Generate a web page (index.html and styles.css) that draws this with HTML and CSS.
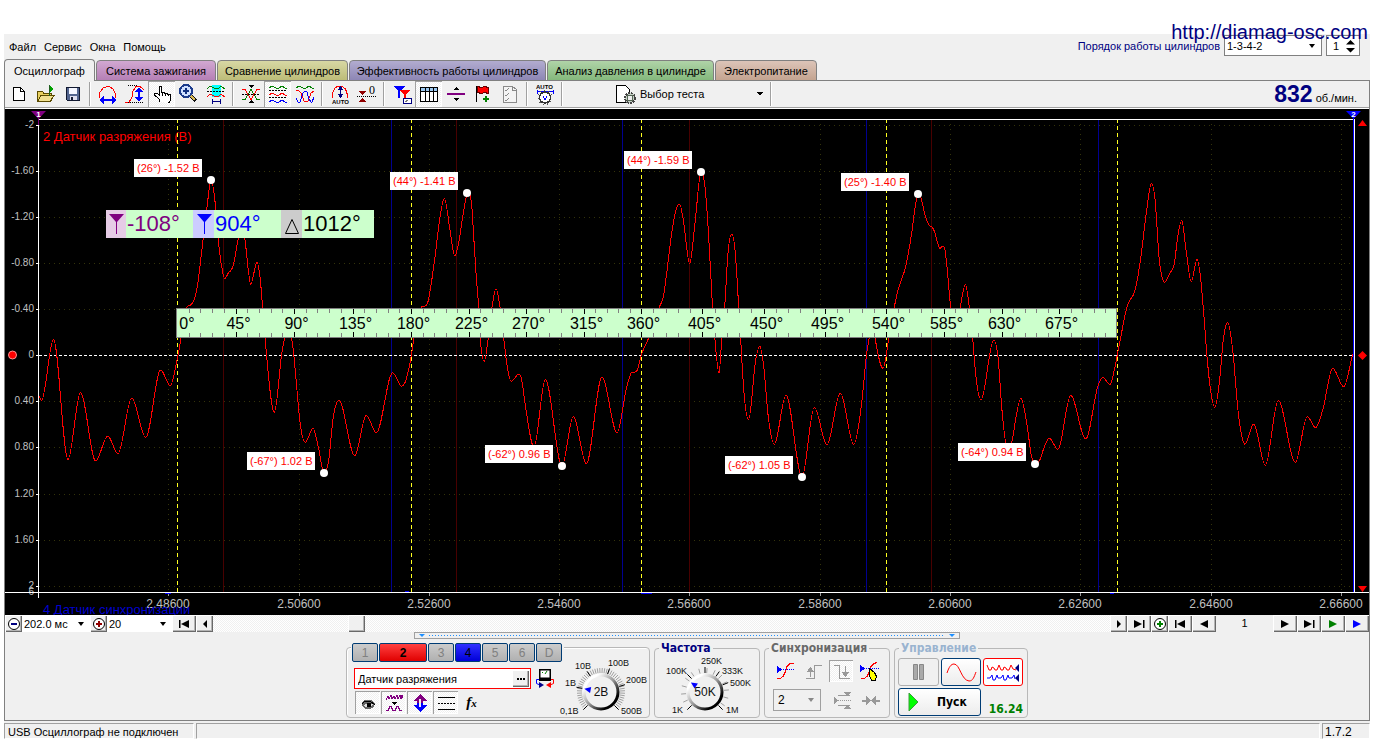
FILE: index.html
```html
<!DOCTYPE html>
<html lang="ru">
<head>
<meta charset="utf-8">
<title>Осциллограф</title>
<link rel="stylesheet" href="styles.css">
</head>
<body>
<div class="app">
  <header class="header">
    <nav class="menu">
      <button type="button">Файл</button><button type="button">Сервис</button><button type="button">Окна</button><button type="button">Помощь</button>
    </nav>
    <div class="order">
      <label for="order">Порядок работы цилиндров</label>
      <span class="select order-select"><select id="order"><option>1-3-4-2</option></select></span>
      <span class="spin"><input type="text" value="1" aria-label="Цилиндр"><svg width="11" height="14" viewBox="0 0 11 14"><path d="M1 5.500 5.500 1 10 5.500zM1 9l4.500 4.500L10 9z"/></svg></span>
    </div>
    <a class="site" href="#">http://diamag-osc.com</a>
  </header>

  <div class="tabs" role="tablist">
    <button type="button" role="tab" aria-selected="true" class="tab t1">Осциллограф</button>
    <button type="button" role="tab" class="tab t2">Система зажигания</button>
    <button type="button" role="tab" class="tab t3">Сравнение цилиндров</button>
    <button type="button" role="tab" class="tab t4">Эффективность работы цилиндров</button>
    <button type="button" role="tab" class="tab t5">Анализ давления в цилиндре</button>
    <button type="button" role="tab" class="tab t6">Электропитание</button>
  </div>

  <main class="main">
    <div class="toolbar">
      <button type="button" class="tool" aria-label="Новый"><svg viewBox="0 0 22 22"><path class="doc" d="M5.500 4.500h7l4 4v9h-11z"/><path class="k" d="M12.500 4.500v4h4"/></svg></button>
      <button type="button" class="tool" aria-label="Открыть"><svg viewBox="0 0 22 22"><path d="M2.500 17V8.500h5l1.500 2h7V17z" fill="#e8d060" stroke="#5a4a00"/><path d="M2.500 18.500 6 12.500h13l-4 6z" fill="#f0e090" stroke="#5a4a00"/><path d="M14 2v8l5-4z" fill="#00a000"/><path d="M14.500 2v11" stroke="#206020"/></svg></button>
      <button type="button" class="tool" aria-label="Сохранить"><svg viewBox="0 0 22 22"><path d="M4.500 4.500h13v13h-12l-1-1z" fill="#52648e" stroke="#101830"/><path d="M7 5h8v6H7z" fill="#f4f6ff"/><path d="M8 13h7v4H8z" fill="#dde"/><path d="M9 14h2v3H9z" fill="#101830"/></svg></button>
      <i class="sep"></i>
      <button type="button" class="tool" aria-label="Период"><svg viewBox="0 0 22 22"><path class="r" d="M2.500 15V10L6 5l4-1.500h2L16 6l2.500 5v4"/><path class="b" stroke-width="2" d="M5 17h12"/><path fill="#00f" d="M2 17l5-4v8zM20 17l-5-4v8z"/></svg></button>
      <button type="button" class="tool" aria-label="Амплитуда"><svg viewBox="0 0 22 22"><path class="r" d="M1 19.500h4L8 14l1-6 3-4.500h4l4 3.500"/><path class="k" stroke-dasharray="1 1" d="M4 2.500h10M4 19.500h15"/><path class="b" stroke-width="2" d="M15 7v10"/><path fill="#00f" d="M15 4l-4 5h8zM15 19l-4-5h8z"/></svg></button>
      <button type="button" class="tool on" aria-label="Рука"><svg viewBox="0 0 22 22"><path fill="#fff" stroke="#000" d="M8.500 18.500v-2L3.500 12v-2h2l3 2.500V3.500h2V9h3v1h3v1h3v6l-2 3.500"/><path class="k" d="M11.500 9v4M14.500 10v3M17.500 11v2"/></svg></button>
      <button type="button" class="tool" aria-label="Лупа"><svg viewBox="0 0 22 22"><path d="M12 12l6 6" stroke="#111" stroke-width="4"/><path d="M13 13l4 4" stroke="#d8b850" stroke-width="2"/><circle cx="8" cy="8" r="6" fill="#cfe0ff" stroke="#1c3c8c" stroke-width="2"/><path d="M8 5v6M5 8h6" stroke="#103080" stroke-width="2"/></svg></button>
      <button type="button" class="tool" aria-label="Фрагмент"><svg viewBox="0 0 22 22"><path fill="#0ff" d="M7 2h9v12H7z"/><path class="g" d="M2 6l3-3 4 2 4 1 3-3 4 3"/><path class="k" stroke-dasharray="2 1" d="M2 8.500h18"/><path class="r" d="M2 14l3-3 4 2 4 1 3-3 4 3"/><path stroke="#000080" d="M7.500 16v5M15.500 16v5M8 18.500h7"/></svg></button>
      <i class="sep"></i>
      <button type="button" class="tool" aria-label="Совместить"><svg viewBox="0 0 22 22"><path class="g" d="M2 16.500h3l6-10 6 10h3"/><path class="r" d="M2 6.500h3l6 10 6-10h3"/><path class="k" stroke-dasharray="2 1" d="M2 11.500h18"/><path d="M8 2h6l-3 3zM8 20h6l-3-3z"/></svg></button>
      <button type="button" class="tool on" aria-label="Раздельно"><svg viewBox="0 0 22 22"><path class="g" d="M2 5l3-2 4 2 2 1 4-3 3 2 2 1"/><path class="k" stroke-dasharray="2 1" d="M2 7.500h18M2 14.500h18"/><path class="r" d="M2 12l3-2 4 2 2 1 4-3 3 2 2 1"/><path class="b" d="M2 19l3-2 4 2 2 1 4-3 3 2 2 1"/></svg></button>
      <button type="button" class="tool" aria-label="Наложение"><svg viewBox="0 0 22 22"><path class="g" d="M2 5l3-2 4 2 2 1 4-3 3 2 2 1"/><path class="r" d="M2 8l2-1 3 3 3 8 2 1 2-1 3-8 3-2"/><path class="b" d="M2 15l2 4h2l3-9 2-2 2 1 2 7 2 3h1l2-5"/></svg></button>
      <i class="sep"></i>
      <button type="button" class="tool" aria-label="Авто"><svg viewBox="0 0 22 22"><path class="r" d="M3.500 15V10l2.500-5 3-2h4l3.500 3 2 6v3"/><path stroke="#000080" d="M11.500 5v9"/><path fill="#000080" d="M11.500 3l-3 4h6zM11.500 15l-3-4h6z"/><text x="3" y="21" class="tiny">AUTO</text></svg></button>
      <button type="button" class="tool" aria-label="Ноль"><svg viewBox="0 0 22 22"><path fill="#900000" d="M2 8h8l-4 4zM2 19h8l-4-4z"/><path class="k" stroke-dasharray="1 1" d="M1 13.500h19"/><text x="13" y="11" class="zero">0</text></svg></button>
      <i class="sep"></i>
      <button type="button" class="tool" aria-label="Фильтр"><svg viewBox="0 0 22 22"><path fill="#00f" d="M2 3h12l-5 5v7H7V8z"/><path fill="#f00" d="M8 7h11l-4 4v7h-2v-7z"/><path d="M12.500 15.500h8v5h-8z" fill="#fff" stroke="#000080"/><path d="M14 19l3-2" stroke="#777"/></svg></button>
      <button type="button" class="tool on" aria-label="Таблица"><svg viewBox="0 0 22 22"><path fill="#fff" stroke="#000" d="M2.500 4.500h17v14h-17z"/><path fill="#9cc8f0" d="M3 5h16v3H3z"/><path class="k" d="M3 8.500h16M7.500 5v13M11.500 5v13M15.500 5v13"/></svg></button>
      <button type="button" class="tool" aria-label="Линейка"><svg viewBox="0 0 22 22"><path stroke="#800080" stroke-width="2" d="M2 11h18"/><path d="M8 7l3-3 3 3zM8 15h6l-3 3z"/></svg></button>
      <button type="button" class="tool" aria-label="Флаг"><svg viewBox="0 0 22 22"><path fill="#f00" stroke="#600" d="M5.500 3.500l4 1 3-1 4 1v6l-4-1-3 1-4-1z"/><path class="k" d="M4.500 3v16"/><path stroke="#008000" stroke-width="2" d="M14 13v6M11 16h6"/></svg></button>
      <button type="button" class="tool" aria-label="Список"><svg viewBox="0 0 22 22"><path fill="#f4f4f4" stroke="#8a8a8a" d="M4.500 3.500h9l4 3v13h-13z"/><path stroke="#888" fill="none" d="M6 7l1 1 3-3M6 12l1 1 3-3M6 17l1 1 3-3M13.500 4v3h4"/></svg></button>
      <i class="sep"></i>
      <button type="button" class="tool" aria-label="Автонастройка"><svg viewBox="0 0 22 22"><text x="2" y="6" class="tiny">AUTO</text><path class="b" d="M3 9l3-1h10l3 1M3 7v4M19 7v4"/><circle cx="11" cy="14.500" r="5.500" fill="#fff" stroke="#333" stroke-width="1.500"/><circle cx="11" cy="14.500" r="7" fill="none" stroke="#555" stroke-dasharray="1 3"/><path class="b" d="M9 13l2 4 2-4"/></svg></button>
      <i class="sep"></i>
      <button type="button" class="test"><svg viewBox="0 0 22 22"><path class="doc" d="M2.500 2.500h9l4 4v13h-13z"/><circle cx="16" cy="15" r="5" fill="#c4d0c4" stroke="#444" stroke-width="2" stroke-dasharray="2 1"/><circle cx="16" cy="15" r="3" fill="#eee" stroke="#565"/></svg><span>Выбор теста</span><svg class="arrow" viewBox="0 0 6 4"><path d="M0 0h6L3 4z"/></svg></button>
      <i class="sep"></i>
      <div class="rpm"><b>832</b><span>об./мин.</span></div>
    </div>

    <svg class="plot" id="plot" viewBox="5 109 1364 506" role="img" aria-label="Осциллограмма"></svg>

    <div class="scroll">
      <button type="button" class="btn w17" aria-label="Меньше"><svg viewBox="0 0 14 14"><circle cx="7" cy="7" r="5.500" class="ring"/><path stroke="#000080" stroke-width="2" d="M4 7h6"/></svg></button>
      <span class="select s1"><select aria-label="Развертка"><option>202.0 мс</option></select></span>
      <button type="button" class="btn w17" aria-label="Больше"><svg viewBox="0 0 14 14"><circle cx="7" cy="7" r="5.500" class="ring"/><path stroke="#900000" stroke-width="2" d="M4 7h6M7 4v6"/></svg></button>
      <span class="select s2"><select aria-label="Масштаб"><option>20</option></select></span>
      <button type="button" class="btn w24" aria-label="В начало"><svg viewBox="0 0 14 14"><path d="M2 3h1.500v8H2zM12 3v8L4 7z"/></svg></button>
      <button type="button" class="btn w17" aria-label="Назад"><svg viewBox="0 0 14 14"><path d="M9 3v8L5 7z"/></svg></button>
      <div class="track"><button type="button" class="btn w17 thumb" aria-label="Позиция"></button></div>
      <button type="button" class="btn w17" aria-label="Вперед"><svg viewBox="0 0 14 14"><path d="M5 3v8l4-4z"/></svg></button>
      <button type="button" class="btn w24" aria-label="В конец"><svg viewBox="0 0 14 14"><path d="M11 3h1.500v8H11zM2 3v8l8-4z"/></svg></button>
      <button type="button" class="btn w17" aria-label="Добавить"><svg viewBox="0 0 14 14"><circle cx="7" cy="7" r="5.500" class="ring"/><path stroke="#008000" stroke-width="2" d="M4 7h6M7 4v6"/></svg></button>
      <button type="button" class="btn w24" aria-label="Первый кадр"><svg viewBox="0 0 14 14"><path d="M2 3h1.500v8H2zM12 3v8L4 7z"/></svg></button>
      <button type="button" class="btn w24" aria-label="Предыдущий кадр"><svg viewBox="0 0 14 14"><path d="M11 3v8L3 7z"/></svg></button>
      <output class="frame">1</output>
      <button type="button" class="btn w24" aria-label="Следующий кадр"><svg viewBox="0 0 14 14"><path d="M3 3v8l8-4z"/></svg></button>
      <button type="button" class="btn w24" aria-label="Последний кадр"><svg viewBox="0 0 14 14"><path d="M11 3h1.500v8H11zM2 3v8l8-4z"/></svg></button>
      <button type="button" class="btn w24" aria-label="Воспроизвести"><svg viewBox="0 0 14 14"><path fill="#008000" d="M3 3v8l8-4z"/></svg></button>
      <button type="button" class="btn w24" aria-label="Воспроизвести все"><svg viewBox="0 0 14 14"><path fill="#00f" d="M3 3v8l8-4z"/></svg></button>
    </div>

    <div class="splitter"><i></i><span></span><i></i></div>

    <div class="panel">
      <section class="group channel">
        <div class="channels">
          <button type="button">1</button><button type="button" class="c2">2</button><button type="button">3</button><button type="button" class="c4">4</button><button type="button">5</button><button type="button">6</button><button type="button">D</button>
        </div>
        <div class="channel-left">
          <div class="sensor-row">
            <div class="sensor"><input type="text" value="Датчик разряжения" aria-label="Датчик"><button type="button" class="btn" aria-label="Выбрать"><svg viewBox="0 0 10 4"><path d="M1 1h2v2H1zM4 1h2v2H4zM7 1h2v2H7z"/></svg></button></div>
            <svg class="probe" viewBox="0 0 20 20"><path d="M4 1h12v12H4z" fill="#000"/><path fill="#fff" d="M5.500 2.500h9v7h-9z"/><path stroke="#008000" fill="none" d="M7 4l1 1M12 3l-2 3"/><path class="b" d="M4 11.500H1.500v4L5 17"/><path class="r" d="M16 11.500h2.500v4L15 17"/><path fill="#00008b" d="M4 14l5 3-5 3z"/><path fill="#f00" d="M16 14l-5 3 5 3z"/></svg>
          </div>
          <div class="modes">
            <button type="button" class="on" aria-label="Показать"><svg viewBox="0 0 20 20"><path fill="#666" d="M4 9l3-2h6l4 3-1 4-4 2H8l-4-3z"/><path fill="#ddd" d="M5 12l4-1h6l-3 3H8z"/><circle cx="11" cy="12" r="2.500"/><path class="k" d="M4 10.500l3-2h5l5 3"/></svg></button>
            <button type="button" class="on" aria-label="Фильтр"><svg viewBox="0 0 20 20"><path stroke="#800080" fill="none" d="M2 7l2-4 1 3 2-4 1 4 2-3 1 3 2-4 1 4 2-4 1 4 1-4 1 3"/><path d="M8 9h5l-2.500 3z"/><path stroke="#800080" fill="none" d="M2 17.500h2l2-4h1l2 4h2l2-4h1l2 4h2"/></svg></button>
            <button type="button" class="on" aria-label="Инверсия"><svg viewBox="0 0 20 20"><path fill="#800080" d="M10 1l7 7h-4v2H7V8H3z"/><path fill="#00f" d="M10 19l7-7h-4v-2H7v2H3z"/><path fill="#f0f0f0" d="M9 6h2v8H9z"/></svg></button>
            <button type="button" class="on" aria-label="Линии"><svg viewBox="0 0 20 20"><path class="k" d="M2 4.500h17M2 16.500h17"/><path class="k" stroke-dasharray="2 1" d="M2 10.500h17"/></svg></button>
            <button type="button" class="fx">f<small>x</small></button>
          </div>
        </div>
        <svg class="knob" id="volts" viewBox="557 654 92 63" width="92" height="63"></svg>
      </section>

      <fieldset class="group freq"><legend>Частота</legend>
        <svg class="knob" id="freq" viewBox="660 655 94 61" width="94" height="61"></svg>
      </fieldset>

      <fieldset class="group sync"><legend>Синхронизация</legend>
        <div class="row">
          <button type="button" aria-label="Уровень"><svg viewBox="0 0 20 20"><path class="r" d="M2 17.500h3l3-2 2-4 2-6 3-3h4"/><path class="b" stroke-dasharray="1 1" d="M6 8.500h13"/><path fill="#00f" d="M2 5v7l5-3.500z"/></svg></button>
          <button type="button" aria-label="Фронт"><svg viewBox="0 0 20 20"><path stroke="#999" fill="none" d="M3 17.500h8.500V4.500H19M7.500 9v7"/><path fill="#999" d="M7.500 6l-4 5h8z"/></svg></button>
          <button type="button" class="on" aria-label="Спад"><svg viewBox="0 0 20 20"><path stroke="#999" fill="none" d="M3 4.500h5.500v13H19M14.500 5v8"/><path fill="#999" d="M14.500 16l-4-5h8z"/></svg></button>
          <button type="button" aria-label="Ручной"><svg viewBox="0 0 20 20"><path class="r" d="M2 17.500h3l3-2 2-4 2-6 3-3 3-1"/><path class="b" stroke-dasharray="1 1" d="M5 7.500h15"/><path fill="#00f" d="M1 4v7l5-3.500z"/><path fill="#ff0" stroke="#000" d="M10.500 7.500l5 4 2 4-1 3.500h-4l-2-4z"/></svg></button>
        </div>
        <div class="row">
          <span class="select s3"><select aria-label="Канал синхронизации" disabled><option>2</option></select></span>
          <button type="button" aria-label="Симметрия"><svg viewBox="0 0 20 20"><path stroke="#999" fill="none" d="M5 5.500h12M5 15.500h12"/><path stroke="#999" stroke-dasharray="1 1" d="M5 10.500h14"/><path fill="#999" d="M11 2h7l-3.500 4zM11 19h7l-3.500-4zM1 7v7l4-3.500z"/></svg></button>
          <button type="button" aria-label="Свести"><svg viewBox="0 0 20 20"><path stroke="#999" stroke-width="2" d="M1 11h5M14 11h5"/><path fill="#999" d="M5 6v9l5-4.500zM15 6v9l-5-4.500z"/></svg></button>
        </div>
      </fieldset>

      <fieldset class="group control"><legend>Управление</legend>
        <div class="ctl">
          <button type="button" class="pause" aria-label="Пауза" disabled><svg viewBox="0 0 36 24"><path d="M12.500 4.500h4v15h-4zM18.500 4.500h4v15h-4z" fill="#aaa" stroke="#888"/></svg></button>
          <button type="button" class="wave" aria-label="Однократно"><svg viewBox="0 0 36 24"><path class="r" d="M4 13C6 7 8 4 11 4c6 0 7 16 15 17 4 0 5-4 7-9"/></svg></button>
          <button type="button" class="cont" aria-label="Непрерывно"><svg viewBox="0 0 36 24"><path class="r" d="M2 5l2 5h2l1-3 2 1 1 2h2l2-5 2 5h2l1-3 2 1 1 2h2l2-5 2 4 3 1"/><path class="b" d="M2 18h3l2-3 1 5h2l2-5 1 3h3l2-3 1 5h2l2-5 1 3h3l2-3 1 4"/><path fill="#000080" d="M34 4v8l-4-4zM34 14v8l-4-4z"/></svg></button>
          <button type="button" class="start"><svg viewBox="0 0 12 20"><path d="M2 1v18l9-9z" fill="#0f0" stroke="#3a9a3a"/></svg><span>Пуск</span></button>
          <output class="time">16.24</output>
        </div>
      </fieldset>
    </div>
  </main>

  <footer class="status">
    <span class="cell conn">USB Осциллограф не подключен</span><span class="cell fill"></span><span class="cell ver">1.7.2</span>
  </footer>
</div>
<script src="app.js"></script>
</body>
</html>
```

FILE: styles.css
```css
* { box-sizing: border-box; }
body { margin: 0; background: #fff; color: #000; font: 11px/14px "Liberation Sans", Arial, sans-serif; }
button, input, select { font: inherit; color: inherit; margin: 0; padding: 0; border: 0; border-radius: 0; background: none; }
svg { display: block; }
fieldset { margin: 0; min-width: 0; }
.k { stroke: #000; fill: none; }
.r { stroke: #f00; fill: none; }
.g { stroke: #008000; fill: none; }
.b { stroke: #00f; fill: none; }
.doc { fill: #fff; stroke: #000; }
.ring { fill: #fff; stroke: #000; }
.tiny { font: bold 6px "Liberation Sans", sans-serif; }
.zero { font: 12px "Liberation Serif", serif; }

.app { margin: 34px 12px 5px 4px; background: #f0f0f0; }

.header { position: relative; display: flex; justify-content: space-between; height: 25px; }
.menu { display: flex; gap: 8px; padding-left: 5px; align-items: center; }
.order { display: flex; align-items: flex-start; gap: 4px; padding: 1px 10px 0 0; }
.order label { color: #000080; line-height: 22px; }
.site { position: absolute; right: 2px; top: -13px; color: #000080; font-size: 20px; line-height: 22px; text-decoration: none; }
.select { position: relative; display: inline-flex; background: #fff; }
.select select { width: 100%; appearance: none; padding-left: 2px; }
.select::after { content: ""; position: absolute; right: 6px; top: 50%; margin-top: -2px; border: 3px solid transparent; border-top: 4px solid #000; border-bottom: 0; pointer-events: none; }
.order-select { width: 98px; height: 21px; border: 1px solid #808080; }
.spin { display: flex; align-items: center; width: 34px; height: 21px; border: 1px solid #808080; background: #fff; }
.spin input { width: 18px; min-width: 0; padding-left: 6px; }

.tabs { display: flex; align-items: flex-end; gap: 1px; height: 22px; }
.tab { height: 21px; border: 1px solid #808080; border-radius: 4px 4px 0 0; white-space: nowrap; }
.t1 { position: relative; z-index: 1; width: 91px; height: 22px; border-bottom: 0; background: #f0f0f0; }
.t2 { width: 120px; background: linear-gradient(#d2a8d2, #b57fb5); }
.t3 { width: 131px; background: linear-gradient(#d8d8a4, #bcbc78); }
.t4 { width: 197px; background: linear-gradient(#b2acd0, #8d86b4); }
.t5 { width: 167px; background: linear-gradient(#b0d4a8, #84b87c); }
.t6 { width: 102px; background: linear-gradient(#dcc4b8, #c4a490); }

.main { margin-top: -1px; border: 1px solid #808080; }
.toolbar { display: flex; align-items: stretch; height: 28px; border-bottom: 1px solid #fff; box-shadow: inset 0 -1px #a0a0a0; }
.tool { display: grid; place-items: center; width: 27px; height: 26px; }
.tool svg, .test svg { width: 22px; height: 22px; shape-rendering: crispEdges; }
.on { background: repeating-conic-gradient(#fff 0 25%, #f0f0f0 0 50%) 0 0 / 2px 2px; box-shadow: inset 1px 1px #a0a0a0, inset -1px -1px #fff; }
.sep { width: 8px; height: 24px; margin-top: 1px; background: linear-gradient(90deg, transparent 3px, #a0a0a0 3px 4px, #fff 4px 5px, transparent 5px); }
.test { display: flex; align-items: center; gap: 4px; margin-left: 48px; padding-right: 4px; width: 153px; height: 26px; }
.test span { flex: 1; text-align: left; }
.test .arrow { width: 6px; height: 4px; }
.rpm { margin-left: auto; padding-right: 12px; display: flex; align-items: baseline; gap: 3px; }
.rpm b { color: #000080; font-size: 23px; line-height: 26px; }

.plot { width: 100%; background: #000; overflow: hidden; }
.plot text { font-family: "Liberation Sans", Arial, sans-serif; }
.f10 { font-size: 10px; fill: #c0c0c0; }
.f12 { font-size: 12px; fill: #c0c0c0; }
.end { text-anchor: end; }
.mid { text-anchor: middle; }
.ch { font-size: 13px; }
.cap { font-size: 11px; fill: #f00; }
.deg { font-size: 16px; text-anchor: middle; }
.big { font-size: 22px; }
.mark { font-size: 8px; font-weight: bold; fill: #fff; text-anchor: middle; }
.crisp { shape-rendering: crispEdges; }

.scroll { display: flex; height: 17px; }
.btn { display: grid; place-items: center; flex: none; background: #f0f0f0; box-shadow: inset 1px 1px #fff, inset -1px -1px #696969, inset -2px -2px #b4b4b4; }
.btn svg { width: 14px; height: 14px; }
.w17 { width: 17px; }
.w24 { width: 24px; }
.s1 { width: 68px; }
.s2 { width: 65px; }
.track { flex: 1; padding-left: 135px; background: repeating-conic-gradient(#fff 0 25%, #f0f0f0 0 50%) 0 0 / 2px 2px; }
.thumb { height: 17px; }
.frame { width: 57px; text-align: center; line-height: 17px; }

.splitter { display: flex; align-items: center; gap: 4px; width: 40%; height: 7px; margin: 0 auto; padding: 0 4px; border: 1px solid #a0a0a0; }
.splitter i { border: 3px solid transparent; border-top: 3px solid #1e90ff; border-bottom: 0; }
.splitter span { flex: 1; height: 1px; background: repeating-linear-gradient(90deg, #1e90ff 0 1px, transparent 1px 3px); }

.panel { display: flex; justify-content: center; gap: 4px; padding: 2px 0; }
.group { height: 77px; border: 1px solid #b8b8b8; border-radius: 4px; box-shadow: inset 1px 1px #fff; padding: 0; }
fieldset.group { box-shadow: none; }
legend { margin-left: 4px; padding: 0 2px; font: bold 12px/14px "DejaVu Sans Condensed", "DejaVu Sans", sans-serif; }
.channel { width: 304px; height: 71px; margin-top: 6px; display: grid; grid-template-columns: 210px 1fr; grid-template-rows: 14px 1fr; }
.channels { grid-column: 1 / 3; justify-self: start; display: flex; gap: 1px; margin: -5px 0 0 4px; padding: 0 2px 0 1px; height: 19px; background: #f0f0f0; }
.channels button { width: 26px; height: 19px; border: 1px solid #003c74; border-radius: 2px; background: linear-gradient(#ccc, #b0b0b0); color: #808080; font-size: 12px; }
.channels .c2 { width: 48px; background: linear-gradient(#ff4040, #e00000); color: #000; font-weight: bold; }
.channels .c4 { background: linear-gradient(#3030ff, #0000d8); color: #000; }
.channel-left { padding: 6px 0 0 7px; }
.sensor-row { display: flex; gap: 4px; }
.sensor { display: flex; width: 177px; height: 21px; border: 1px solid #f00; background: #fff; padding: 1px; }
.sensor input { flex: 1; min-width: 0; padding-left: 2px; }
.sensor .btn { width: 17px; }
.sensor .btn svg { width: 10px; height: 4px; }
.probe { width: 20px; height: 20px; }
.modes { display: flex; gap: 1px; margin: 2px 0 0 1px; }
.modes button { width: 25px; height: 23px; display: grid; place-items: center; }
.modes svg { width: 20px; height: 20px; shape-rendering: crispEdges; }
.modes .fx { display: block; font: italic bold 15px/20px "Liberation Serif", serif; }
.fx small { font-size: 11px; }
.channel .knob { margin-top: -8px; grid-row: 2; grid-column: 2; }
.knob text { font: 9px "Liberation Sans", Arial, sans-serif; fill: #101010; }
.knob .val { font-size: 12px; text-anchor: middle; }
.freq { width: 106px; }
.freq legend { color: #000080; }
.freq .knob { margin-left: 5px; }
.sync { width: 126px; }
.sync legend { color: #696969; }
.sync .row { display: flex; gap: 4px; padding: 5px 0 0 8px; }
.sync .row + .row { padding-top: 7px; }
.sync button { width: 24px; height: 22px; display: grid; place-items: center; }
.sync svg { width: 20px; height: 20px; shape-rendering: crispEdges; }
.s3 { width: 48px; height: 22px; margin-right: 6px; border: 1px solid #a0a0a0; background: #f0f0f0; font-size: 12px; }
.s3 select { padding-left: 4px; opacity: 1; }
.s3::after { border-top-color: #888; }
.control { width: 134px; }
.control legend { color: #9ab4d0; }
.ctl { display: grid; grid-template-columns: 41px 40px 40px; gap: 2px; padding: 3px 0 0 3px; }
.ctl button { height: 28px; border: 1px solid #003c74; border-radius: 3px; background: linear-gradient(#fff, #ececec); display: flex; align-items: center; justify-content: center; }
.ctl .pause { border-color: #b0b0b0; background: #f0f0f0; }
.ctl .cont { border: 1px solid #f00; background: #fff; }
.ctl .pause svg, .ctl .wave svg, .ctl .cont svg { width: 36px; height: 24px; flex: none; }
.ctl .start { grid-column: 1 / 3; font: bold 12px "DejaVu Sans Condensed", "DejaVu Sans", sans-serif; justify-content: flex-start; padding-left: 8px; gap: 18px; }
.start svg { width: 12px; height: 20px; }
.time { color: #008000; font: bold 12px/14px "DejaVu Sans Condensed", "DejaVu Sans", sans-serif; align-self: end; text-align: right; padding-bottom: 0; }

.status { display: flex; gap: 2px; height: 18px; padding-top: 2px; }
.cell { height: 16px; line-height: 16px; border: 1px solid #a0a0a0; border-right-color: #fff; border-bottom-color: #fff; padding-left: 3px; }
.conn { width: 190px; }
.fill { flex: 1; }
.ver { width: 48px; padding-left: 2px; font-size: 12px; }
```

FILE: app.js
```js
const NS = 'http://www.w3.org/2000/svg';

function add(parent, name, attrs, text) {
  const el = document.createElementNS(NS, name);
  for (const key in attrs) el.setAttribute(key, attrs[key]);
  if (text !== undefined) el.textContent = text;
  parent.appendChild(el);
  return el;
}

// Vacuum sensor trace: x, y pairs.
const trace = [
  39,396, 41.5,400.5, 53.5,339.5, 68,459.5, 80.5,392.5, 95.7,461, 107.7,436, 118,453.7, 131.7,398, 145.7,437.5,
  160.7,370, 170.3,385.7, 178,355, 187.7,306, 190,305.5, 192.7,302.7, 196.7,290, 202.7,243, 206.7,210, 211,180,
  215.7,208, 218.3,240, 222.3,270, 224.7,278.7, 228.3,273, 232.7,267, 235,257, 238,240, 241,228, 245,240,
  248.3,270, 250.7,284.3, 257,262.3, 260,277, 262.7,308, 266.7,357, 274.3,412.3, 282.3,350, 287.5,330, 293.3,350,
  296.7,387, 300,422, 305.3,442.3, 313,428.3, 318.3,447, 324,473, 328.3,463, 333.3,417, 339,400.3, 354.7,455.7,
  366.3,415.3, 376.3,432.7, 392.7,372.7, 401.7,386.3, 406.3,379, 411.7,353, 414,338, 422.3,306.3, 425,306,
  427.7,302.7, 430.7,287, 435,257, 440,217, 444.3,198.3, 450,230, 454.7,256, 458.3,245, 463.3,213, 468,192,
  471.7,205, 473.3,230, 476,273, 478.7,308, 480.3,338, 484.3,361.3, 488,340, 492,307, 496,288.7, 500,307,
  503.7,338, 507.3,367, 511.3,381.3, 519,374, 521.7,380, 525,403, 534,447, 545.3,379.3, 562,466, 573.3,416.3,
  586.3,463.7, 602,377, 617,432.7, 626.7,387, 631.7,372.6, 634.3,372.3, 637.3,370, 640.7,357, 648.7,338,
  659.3,307, 663.3,297, 666.7,273, 671.7,233, 676.7,208, 679.7,204, 683.3,220, 689.7,263.7, 695,223, 701,172,
  704.8,185, 708.3,230, 712.3,303, 715,340, 719,373.3, 721.7,340, 724.7,307, 728,253, 731.7,234, 735.3,253,
  738.3,300, 740.7,340, 744,393, 748.7,419.3, 755.7,360, 759.7,346, 763.3,363, 768.3,417, 774.3,444.3, 786,395,
  802,477, 814.3,407.3, 827,444.7, 840.3,393, 853.7,444.3, 861.7,403, 866.7,353, 869.3,338, 873,326, 875,338,
  883,368.3, 886,357, 888.7,338, 894.3,307, 897.3,293, 906,265, 911.7,233, 915,208, 918.5,194, 921,198, 925,215,
  929,225, 932.3,227.3, 935,233, 937.7,243, 940,248.3, 943,246, 945,250, 947.3,270, 950.7,307, 955.5,322,
  960,308, 965.3,284.3, 969.3,307, 972.7,338, 975,367, 981,399.7, 993.7,340, 998.3,360, 1001.7,407, 1008.5,452,
  1021,398.3, 1026.7,423, 1031.7,457, 1035,464, 1039.3,461, 1044.3,447, 1049.3,438.3,
  1058,449.3, 1070.7,395.3, 1085.7,439, 1098.3,385, 1102.7,377.3, 1110,384.7, 1114.3,370, 1117.7,353, 1122.7,327,
  1126.7,308, 1130.7,299, 1133.7,294, 1136.7,283, 1140.7,258, 1146.7,210, 1151.3,183.3, 1154.8,197, 1159.3,260,
  1162,277, 1164.3,282.3, 1170,273, 1174,265, 1178.3,233, 1181.7,220.3, 1186,250, 1191.3,281.7,
  1197,259.3, 1200,273, 1204,317, 1207.3,360, 1211,393, 1214.7,407.3, 1219.3,383, 1223.3,340, 1227.7,322.3,
  1232.7,350, 1238.3,413, 1245,444.3, 1253.7,424, 1265.3,465.3, 1278.3,400.3, 1295.3,462.3, 1307.3,416.7,
  1315.7,427.7, 1322.7,410, 1332.7,368.3, 1343.7,386.7, 1352.7,354
];

// Monotone cubic interpolation keeps every peak where it was sampled.
function smoothPath(data) {
  const x = [], y = [];
  for (let i = 0; i < data.length; i += 2) { x.push(data[i]); y.push(data[i + 1]); }
  const n = x.length, d = [], m = [];
  for (let i = 0; i < n - 1; i++) d.push((y[i + 1] - y[i]) / (x[i + 1] - x[i]));
  m.push(d[0]);
  for (let i = 1; i < n - 1; i++) {
    const a = d[i - 1], b = d[i];
    const h0 = x[i] - x[i - 1], h1 = x[i + 1] - x[i];
    const mean = (a * h1 + b * h0) / (h0 + h1);
    const cap = 2.5 * Math.min(Math.abs(a), Math.abs(b));
    m.push(a * b <= 0 ? 0 : Math.sign(a) * Math.min(Math.abs(mean), cap));
  }
  m.push(d[n - 2]);
  let path = `M${x[0]} ${y[0]}`;
  for (let i = 0; i < n - 1; i++) {
    const h = (x[i + 1] - x[i]) / 3;
    path += `C${x[i] + h} ${y[i] + m[i] * h} ${x[i + 1] - h} ${y[i + 1] - m[i + 1] * h} ${x[i + 1]} ${y[i + 1]}`;
  }
  return path;
}

const plot = document.getElementById('plot');
const line = (x1, y1, x2, y2, stroke, dash) =>
  add(plot, 'path', { d: `M${x1} ${y1}L${x2} ${y2}`, stroke, class: 'crisp', 'stroke-dasharray': dash || 'none' });

const yTicks = [[125,'-2'],[171,'-1.60'],[217,'-1.20'],[263,'-0.80'],[309,'-0.40'],[355,'0'],[401,'0.40'],[447,'0.80'],[494,'1.20'],[540,'1.60'],[586,'2']];
const xTicks = [168,299,429,559,689,820,950,1080,1211,1341];

yTicks.forEach(([y, label]) => {
  if (y !== 355) line(39, y + 0.5, 1353, y + 0.5, '#33330a', '1 4');
  line(36, y + 0.5, 39, y + 0.5, '#fff');
  add(plot, 'text', { x: 34, y: y + 3, class: 'f10 end' }, label);
});
add(plot, 'text', { x: 34, y: 595, class: 'f10 end' }, '6');
xTicks.forEach((x, i) => {
  line(x + 0.5, 124, x + 0.5, 592, '#33330a', '1 4');
  line(x + 0.5, 593, x + 0.5, 596, '#999');
  add(plot, 'text', { x, y: 608, class: 'f12 mid' }, (2.486 + i * 0.02).toFixed(5));
});
[223, 456, 689, 931].forEach(x => line(x + 0.5, 120, x + 0.5, 592, '#480000'));
[391, 622, 866, 1098].forEach(x => line(x + 0.5, 120, x + 0.5, 592, '#000090'));
add(plot, 'text', { x: 43, y: 141, class: 'ch', fill: '#f00' }, '2 Датчик разряжения (В)');
[177, 411, 641, 886, 1117].forEach(x => line(x + 0.5, 119, x + 0.5, 592, '#ffff20', '4 3'));
line(39, 355.5, 1353, 355.5, '#fff', '3 2');
add(plot, 'path', { d: smoothPath(trace), stroke: '#f00', fill: 'none', class: 'crisp' });

add(plot, 'text', { x: 43, y: 614, class: 'ch', fill: '#0000d0' }, '4 Датчик синхронизации');
line(165, 593.5, 171, 593.5, '#00f');
line(405, 591.5, 409, 591.5, '#00f');
line(641, 593.5, 652, 593.5, '#00f');
line(1110, 593.5, 1114, 593.5, '#00f');
line(38.5, 119, 38.5, 598, '#fff');
line(38, 119.5, 1354, 119.5, '#fff');
line(5, 592.5, 1369, 592.5, '#fff');
line(1353.5, 116, 1353.5, 592, '#00f');
line(1354.5, 119, 1354.5, 592, '#fff');
line(38.5, 116, 38.5, 125, '#800080');

add(plot, 'path', { d: 'M31 111h15l-7.5 8z', fill: '#800080' });
add(plot, 'path', { d: 'M1346 111h15l-7.5 8z', fill: '#00f' });
add(plot, 'text', { x: 38.5, y: 117, class: 'mark' }, '1');
add(plot, 'text', { x: 1353.5, y: 117, class: 'mark' }, '2');
add(plot, 'circle', { cx: 12.5, cy: 355, r: 4, fill: '#f00', stroke: '#ff9090' });
add(plot, 'path', { d: 'M1358 126h9l-4.5-6zM1358 355.5l4.500-4.500 4.500 4.500-4.500 4.500zM1358 586h9l-4.500 6z', fill: '#f00' });

// Degree ruler
add(plot, 'rect', { x: 176.5, y: 308.5, width: 940, height: 29, fill: '#cfc', stroke: '#808080', class: 'crisp' });
const turns = [177, 411, 641, 886, 1117];
for (let k = 1; k < 80; k++) {
  const seg = Math.floor(k / 20);
  const x = Math.round(turns[seg] + (turns[seg + 1] - turns[seg]) * (k % 20) / 20) + 0.5;
  const major = k % 5 === 0, len = major ? 5 : 4, color = major ? '#000' : '#808080';
  line(x, 309, x, 309 + len, color);
  line(x, 337 - len, x, 337, color);
  if (major) add(plot, 'text', { x: x + 2, y: 329, class: 'deg' }, k * 9 + '°');
}
add(plot, 'text', { x: 187, y: 329, class: 'deg' }, '0°');

// Cursor readout
add(plot, 'rect', { x: 106, y: 210, width: 268, height: 28, fill: '#cfc' });
add(plot, 'rect', { x: 106, y: 210, width: 20, height: 28, fill: '#e6cce6' });
add(plot, 'rect', { x: 193, y: 210, width: 21, height: 28, fill: '#ccf' });
add(plot, 'rect', { x: 281, y: 210, width: 21, height: 28, fill: '#ccc' });
add(plot, 'path', { d: 'M109 214h15l-7 8v12h-1v-12z', fill: '#800080' });
add(plot, 'path', { d: 'M197 214h15l-7 8v12h-1v-12z', fill: '#00f' });
add(plot, 'path', { d: 'M285.5 233.500h13l-6.500-14z', fill: 'none', stroke: '#000' });
add(plot, 'text', { x: 127, y: 231, class: 'big', fill: '#800080' }, '-108°');
add(plot, 'text', { x: 215, y: 231, class: 'big', fill: '#00f' }, '904°');
add(plot, 'text', { x: 303, y: 231, class: 'big' }, '1012°');

[
  [134,159,'(26°) -1.52 В',211,180], [390,172,'(44°) -1.41 В',467,193], [624,151,'(44°) -1.59 В',701,172],
  [841,173,'(25°) -1.40 В',918,194], [247,452,'(-67°) 1.02 В',324,473], [485,445,'(-62°) 0.96 В',562,466],
  [725,456,'(-62°) 1.05 В',802,477], [958,443,'(-64°) 0.94 В',1035,464]
].forEach(([x, y, label, cx, cy]) => {
  add(plot, 'rect', { x, y, width: 68, height: 18, fill: '#fff' });
  add(plot, 'text', { x: x + 3, y: y + 13, class: 'cap' }, label);
  add(plot, 'circle', { cx, cy, r: 4, fill: '#fff' });
});

// Rotary knobs
function knob(id, cx, cy, value, angle, labels, ticks, fine) {
  const svg = document.getElementById(id);
  const pt = (deg, r) => {
    const a = deg * Math.PI / 180;
    return `${(cx + r * Math.sin(a)).toFixed(2)} ${(cy - r * Math.cos(a)).toFixed(2)}`;
  };
  for (let a = -135; a <= 135; a += fine) add(svg, 'path', { d: `M${pt(a, 19)}L${pt(a, 24)}`, stroke: '#a0a0a0' });
  ticks.forEach(a => add(svg, 'path', { d: `M${pt(a, 19)}L${pt(a, 25)}`, stroke: '#000' }));
  const grad = add(svg, 'linearGradient', { id: id + 'Rim', x1: 0, y1: 0, x2: 1, y2: 1 });
  [['0.2', '#fff'], ['0.5', '#999'], ['0.8', '#000']].forEach(([offset, color]) =>
    add(grad, 'stop', { offset, 'stop-color': color }));
  add(svg, 'circle', { cx, cy, r: 17, fill: '#f0f0f0', stroke: `url(#${id}Rim)`, 'stroke-width': 3 });
  add(svg, 'path', { d: `M${pt(angle, 17)}L${pt(angle - 16, 11)}L${pt(angle + 16, 11)}z`, fill: '#00f' });
  add(svg, 'text', { x: cx, y: cy + 4, class: 'val' }, value);
  labels.forEach(([x, y, text]) => add(svg, 'text', { x, y }, text));
}
knob('volts', 601, 692, '2В', -79, [[575,669,'10В'],[608,666,'100В'],[565,686,'1В'],[626,683,'200В'],[560,714,'0,1В'],[621,714,'500В']], [-135,-79,-34,20,73,135], 6);
knob('freq', 705, 692, '50K', -56, [[666,674,'100K'],[701,664,'250K'],[722,674,'333K'],[730,686,'500K'],[672,713,'1K'],[726,713,'1M']], [-135,-45,0,35,68,135], 20);
```
